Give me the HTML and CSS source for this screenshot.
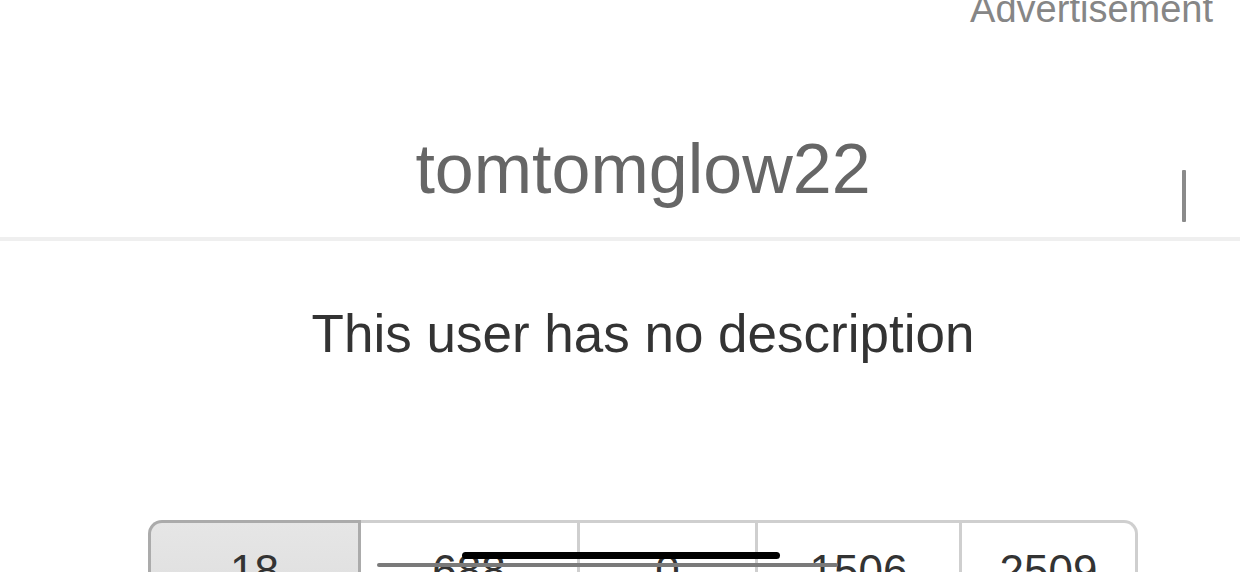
FILE: index.html
```html
<!DOCTYPE html>
<html lang="en">
<head>
<meta charset="utf-8">
<title>tomtomglow22</title>
<link rel="stylesheet" href="styles.css">
</head>
<body>
<div class="ad">Advertisement</div>
<header class="profile-head">
  <h1 class="name">tomtomglow22</h1>
  <span class="caret"></span>
</header>
<main class="page">
  <p class="desc">This user has no description</p>
  <div class="stats">
    <div class="stat active">18</div>
    <div class="stat">688</div>
    <div class="stat">0</div>
    <div class="stat">1506</div>
    <div class="stat">2509</div>
  </div>
</main>
<div class="scroll-line"></div>
<div class="home-bar"></div>
</body>
</html>
```
FILE: styles.css
```css
html, body {
  margin: 0;
  padding: 0;
  overflow: hidden;
  background: #fff;
}
body {
  font-family: "Liberation Sans", Arial, Helvetica, sans-serif;
  position: relative;
  height: 572px;
}
.ad {
  text-align: right;
  padding-right: 27px;
  font-size: 38px;
  line-height: 38px;
  color: #868686;
  margin-top: -10px;
}
.profile-head {
  position: relative;
  padding-left: 46px;
  margin-top: 101px;
  border-bottom: 4px solid #efefef;
  height: 108px;
  box-sizing: content-box;
}
.name {
  margin: 0;
  font-weight: normal;
  text-align: center;
  font-size: 70px;
  line-height: 80px;
  color: #666;
}
.caret {
  position: absolute;
  right: 54px;
  top: 41px;
  width: 4px;
  height: 52px;
  background: #8a8a8a;
  border-radius: 1px;
}
.page {
  padding-left: 46px;
}
.desc {
  margin: 61px 0 0;
  text-align: center;
  font-size: 53px;
  line-height: 64px;
  color: #333;
}
.stats {
  margin: 154px auto 0;
  width: 990px;
  display: grid;
  grid-template-columns: 213px 219px 178px 204px 176px;
}
.stat {
  box-sizing: border-box;
  border-top: 3px solid #cfcfcf;
  border-right: 3px solid #cfcfcf;
  padding-top: 23px;
  height: 110px;
  text-align: center;
  font-size: 44px;
  line-height: 50px;
  color: #333;
}
.stat.active {
  border-left: 3px solid #ababab;
  border-top-color: #ababab;
  border-right-color: #ababab;
  border-top-left-radius: 14px;
  background: linear-gradient(#e6e6e6, #dcdcdc);
}
.stat:last-child {
  border-top-right-radius: 14px;
}
.scroll-line {
  position: absolute;
  left: 377px;
  top: 563px;
  width: 461px;
  height: 4px;
  background: #7a7a7a;
  border-radius: 2px;
}
.home-bar {
  position: absolute;
  left: 462px;
  top: 552px;
  width: 318px;
  height: 7px;
  background: #000;
  border-radius: 4px;
}
```
